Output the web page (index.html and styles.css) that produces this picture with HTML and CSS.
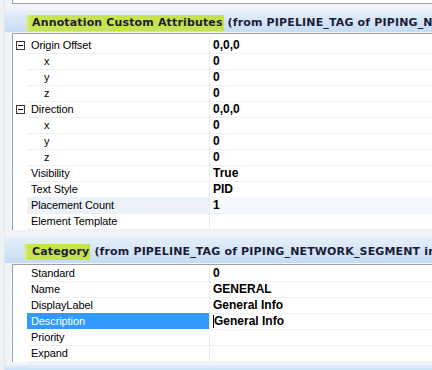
FILE: index.html
```html
<!DOCTYPE html>
<html lang="en">
<head>
    <meta charset="UTF-8">
    <title>Properties</title>
    <link rel="stylesheet" href="styles.css">
</head>
<body>
    <div class="frame">
        <!-- end of previous group -->
        <div class="prev"></div>

        <!-- Annotation Custom Attributes -->
        <div class="section-head first">
            <span class="tag">Annotation Custom Attributes</span>
            <span class="from">&nbsp;(from PIPELINE_TAG of PIPING_NETWORK_SEGMENT in PIPING_NETWORK_SYSTEM)</span>
        </div>
        <div class="grid padded">
            <div class="row"><div class="indent"><span class="toggle"></span></div><div class="name">Origin Offset</div><div class="value">0,0,0</div></div>
            <div class="row"><div class="indent"></div><div class="name sub">x</div><div class="value">0</div></div>
            <div class="row"><div class="indent"></div><div class="name sub">y</div><div class="value">0</div></div>
            <div class="row"><div class="indent"></div><div class="name sub">z</div><div class="value">0</div></div>
            <div class="row"><div class="indent"><span class="toggle"></span></div><div class="name">Direction</div><div class="value">0,0,0</div></div>
            <div class="row"><div class="indent"></div><div class="name sub">x</div><div class="value">0</div></div>
            <div class="row"><div class="indent"></div><div class="name sub">y</div><div class="value">0</div></div>
            <div class="row"><div class="indent"></div><div class="name sub">z</div><div class="value">0</div></div>
            <div class="row"><div class="indent"></div><div class="name">Visibility</div><div class="value">True</div></div>
            <div class="row"><div class="indent"></div><div class="name">Text Style</div><div class="value">PID</div></div>
            <div class="row hover"><div class="indent"></div><div class="name">Placement Count</div><div class="value">1</div></div>
            <div class="row"><div class="indent"></div><div class="name">Element Template</div><div class="value"></div></div>
        </div>

        <!-- Category -->
        <div class="section-head second">
            <span class="tag">Category</span>
            <span class="from">&nbsp;(from PIPELINE_TAG of PIPING_NETWORK_SEGMENT in PIPING_NETWORK_SYSTEM)</span>
        </div>
        <div class="grid">
            <div class="row"><div class="indent"></div><div class="name">Standard</div><div class="value">0</div></div>
            <div class="row"><div class="indent"></div><div class="name">Name</div><div class="value">GENERAL</div></div>
            <div class="row"><div class="indent"></div><div class="name">DisplayLabel</div><div class="value">General Info</div></div>
            <div class="row selected"><div class="indent"></div><div class="name">Description</div><div class="value editing"><span class="caret"></span>General Info</div></div>
            <div class="row"><div class="indent"></div><div class="name">Priority</div><div class="value"></div></div>
            <div class="row"><div class="indent"></div><div class="name">Expand</div><div class="value"></div></div>
        </div>

        <div class="section-head next"></div>
    </div>
</body>
</html>
```

FILE: styles.css
```css
/* Reset */
body {
    margin: 0;
    padding: 0;
    width: 432px;
    height: 370px;
    overflow: hidden;
    background: #eef2f7;
    font-family: 'Liberation Sans', Arial, sans-serif;
    color: #000;
}

.frame {
    margin-left: 4px;
    padding-left: 7px;
    border-left: 1px solid #e2e7ee;
    background: #f0f4f8;
    width: 500px;
}

/* bottom edge of the group above */
.prev {
    height: 3px;
    background: #fff;
    border-left: 1px solid #a0a0a0;
    border-bottom: 1px solid #a0a0a0;
}

/* Group headers */
.section-head {
    display: flex;
    align-items: flex-end;
    margin-left: -7px;
    padding-left: 21px;
    height: 22px;
    background: linear-gradient(to bottom, #e6f0fa, #c5dcf3);
    font-family: 'DejaVu Sans', Verdana, sans-serif;
    font-weight: bold;
    font-size: 11px;
    letter-spacing: 0.15px;
    color: #1c1c38;
    white-space: nowrap;
    overflow: hidden;
}

.section-head.first {
    margin-top: 6px;
    margin-bottom: 1px;
}

.section-head.second {
    margin-top: 7px;
    height: 26px;
    padding-left: 19px;
    margin-bottom: 1px;
}

.section-head.next {
    margin-top: 3px;
    height: 6px;
}

.tag {
    display: block;
    height: 16px;
    line-height: 16px;
    padding: 0 1px 0 6px;
    margin-bottom: 1px;
    background: linear-gradient(to right, #dcefa0, #c8e44e 5px, #c6e24a);
}

.second .tag {
    margin-bottom: 3px;
    padding-left: 8px;
}

.from {
    display: block;
    height: 16px;
    line-height: 16px;
    margin-bottom: 1px;
}

.second .from {
    margin-bottom: 3px;
}

/* Property grids */
.grid {
    background: #fff;
    border-top: 1px solid #a0a0a0;
    border-bottom: 1px solid #a0a0a0;
    border-left: 1px solid #a0a0a0;
}

.grid.padded {
    padding-top: 3px;
}

.row {
    display: grid;
    grid-template-columns: 14px 183px 1fr;
    height: 16px;
}

.indent {
    background: #fff;
}

.toggle {
    display: block;
    position: relative;
    width: 7px;
    height: 7px;
    margin: 4px 0 0 3px;
    border: 1px solid #3a3a3a;
    background: #fff;
}

.toggle::after {
    content: '';
    position: absolute;
    left: 1px;
    top: 3px;
    width: 5px;
    height: 1px;
    background: #000;
}

.name {
    border-bottom: 1px solid #f0f0f0;
    border-right: 1px solid #ebebeb;
    padding-left: 4px;
    font-size: 11px;
    line-height: 16px;
    letter-spacing: -0.1px;
    white-space: nowrap;
}

.name.sub {
    padding-left: 17px;
}

.value {
    border-bottom: 1px solid #f0f0f0;
    padding-left: 3px;
    font-size: 12px;
    font-weight: bold;
    line-height: 16px;
    white-space: nowrap;
}

.row.hover .name {
    background: #edf2f9;
}

.row.hover .value {
    background: #f5f8fc;
}

.row.selected .name {
    background: #3399ff;
    color: #fff;
    border-bottom-color: #fff;
}

.value.editing {
    display: flex;
    align-items: center;
}

.caret {
    display: block;
    width: 1px;
    height: 13px;
    background: #000;
}
```
